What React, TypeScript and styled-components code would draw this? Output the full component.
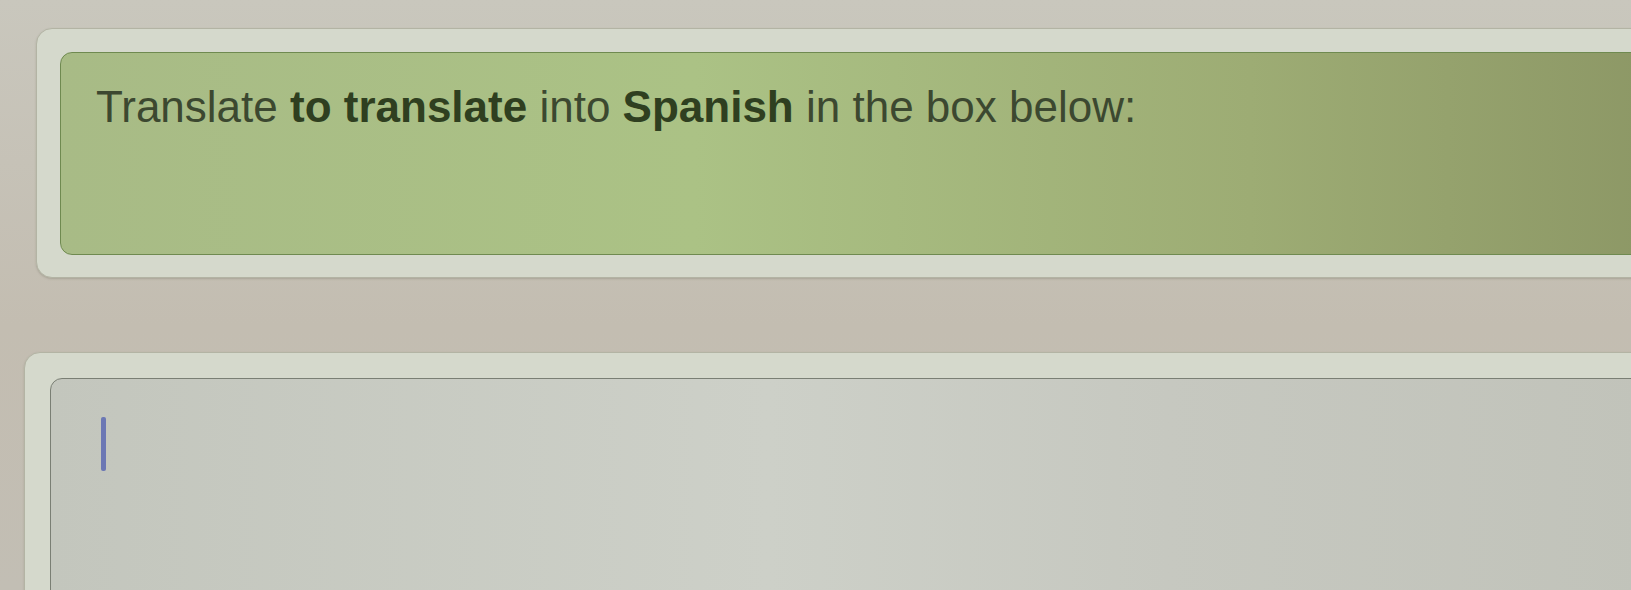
import styled, { createGlobalStyle } from "styled-components";

const Global = createGlobalStyle`
  html, body {
    margin: 0;
    padding: 0;
    width: 1631px;
    height: 590px;
    overflow: hidden;
    background: linear-gradient(180deg, #c9c7bd 0%, #c3bdb1 55%, #c2beb4 100%);
    font-family: "Liberation Sans", Arial, sans-serif;
  }
`;

const Page = styled.div`
  display: flex;
  flex-direction: column;
  gap: 74px;
  padding-top: 28px;
  height: 590px;
  overflow: hidden;
  box-sizing: border-box;
`;

const Frame = styled.div<{ $indent: number; $height: number; $pad: number }>`
  flex: none;
  margin-left: ${(p) => p.$indent}px;
  margin-right: -40px;
  height: ${(p) => p.$height}px;
  padding: ${(p) => p.$pad}px 23px 22px ${(p) => p.$pad}px;
  background: #d5d9cc;
  border: 1px solid #b3b4a4;
  border-radius: 16px;
  box-shadow: 0 1px 2px rgba(90, 90, 70, 0.25);
  box-sizing: border-box;
  display: flex;
`;

const PromptBox = styled.div`
  flex: 1;
  background: linear-gradient(90deg, #a8bb86 0%, #abc285 40%, #9dac74 75%, #8d9866 100%);
  border: 1.5px solid #6f8a50;
  border-radius: 12px;
  padding: 29px 35px;
`;

const Prompt = styled.p`
  margin: 0;
  font-size: 44px;
  line-height: 50px;
  color: #3c4830;

  b {
    color: #2f3f20;
    font-weight: 700;
  }
`;

const AnswerBox = styled.div`
  flex: 1;
  background: linear-gradient(90deg, #c3c6bd 0%, #cdd0c8 45%, #c6c8c0 70%, #c1c3ba 100%);
  border: 1.5px solid #7a7f74;
  border-radius: 12px;
  padding: 38px 50px;
`;

const Caret = styled.span`
  display: block;
  width: 5px;
  height: 54px;
  border-radius: 2px;
  background: #6c78b4;
`;

export default function App() {
  return (
    <>
      <Global />
      <Page>
        <Frame $indent={36} $height={250} $pad={23}>
          <PromptBox>
            <Prompt>
              Translate <b>to translate</b> into <b>Spanish</b> in the box below:
            </Prompt>
          </PromptBox>
        </Frame>
        <Frame $indent={24} $height={400} $pad={25}>
          <AnswerBox>
            <Caret />
          </AnswerBox>
        </Frame>
      </Page>
    </>
  );
}
